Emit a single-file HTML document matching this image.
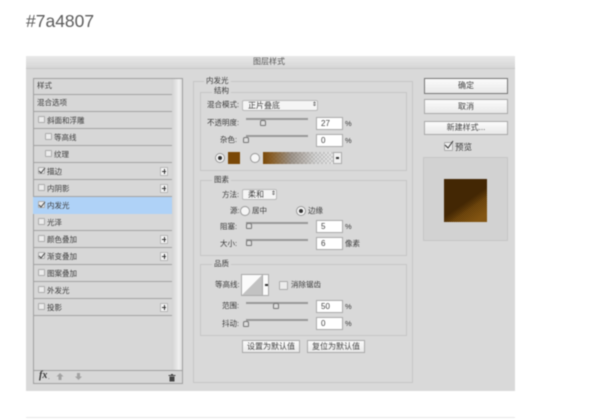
<!DOCTYPE html>
<html><head><meta charset="utf-8">
<style>
html,body{margin:0;padding:0;background:#fff}
body{width:600px;height:420px;position:relative;overflow:hidden;font-family:"Liberation Sans","Noto Sans CJK SC",sans-serif}
#d div,#d span{position:absolute;box-sizing:border-box}
#d{position:absolute;left:0;top:0;width:600px;height:420px;filter:blur(.45px)}
.t{font-size:7.5px;line-height:10px;color:#3c3c3c;white-space:nowrap}
.r{left:33px;width:139px;height:17px;border-bottom:1px solid #a4a4a4}
.cb{width:7px;height:7px;background:#ececec;border:1px solid #ababab;border-radius:1px}
.pl{width:8px;height:9px;left:160px;background:#f4f4f4;border:1px solid #b8b8b8;color:#333}
.pl:before{content:"";position:absolute;left:1px;top:3px;width:4px;height:1px;background:#333}
.pl:after{content:"";position:absolute;left:2.5px;top:1px;width:1px;height:5px;background:#333}
.gb{border:1px solid #c6c6c6}
.lb{background:#d9d9d9;padding:0 2px}
.sel{background:#f5f5f5;border:1px solid #b8b8b8;border-radius:2px;font-size:8px;line-height:9px;color:#444;padding-left:5px;white-space:nowrap}
.tr{height:2px;width:62px;left:246px;background:#999}
.th{width:6px;height:6px;background:#ddd;border:1px solid #777;border-radius:2px 2px 1px 1px}
.in{left:316px;width:27px;height:13px;background:#fff;border:1px solid #aaa;font-size:8px;line-height:11px;color:#444;padding-left:4px;font-family:"Liberation Sans",sans-serif}
.rd{width:10px;height:10px;border-radius:50%;background:#f6f6f6;border:1px solid #999}
.dot{left:2px;top:2px;width:4px;height:4px;border-radius:50%;background:#333}
.btn{background:linear-gradient(#fbfbfb,#e9e9e9);border:1px solid #aaa;font-size:8px;color:#444;text-align:center;white-space:nowrap}
</style></head><body><div id="d">
<div style="left:26px;top:10px;font-size:17.5px;line-height:22px;color:#5c5c5c;font-family:'Liberation Sans',sans-serif">#7a4807</div>

<div style="left:26px;top:56px;width:489px;height:335px;background:#d9d9d9"></div>
<div style="left:26px;top:56px;width:489px;height:13px;background:linear-gradient(#e8e8e8,#d6d6d6);border-bottom:1px solid #c6c6c6"></div>
<div class="t" style="left:253px;top:57px;color:#555;font-size:8px">图层样式</div>

<div style="left:33px;top:78px;width:150px;height:306px;background:#d7d7d7;border:1px solid #a0a0a0"></div>
<div style="left:172px;top:79px;width:10px;height:291px;background:linear-gradient(90deg,#d3d3d3,#f0f0f0 70%,#dcdcdc)"></div>
<div style="left:34px;top:370px;width:148px;height:1px;background:#a0a0a0"></div>

<div class="r" style="top:78px"></div><div class="t" style="left:37px;top:81px">样式</div>
<div class="r" style="top:95px"></div><div class="t" style="left:37px;top:98px">混合选项</div>
<div class="r" style="top:112px"></div><div class="cb" style="left:38px;top:116px"></div><div class="t" style="left:47px;top:116px">斜面和浮雕</div>
<div class="r" style="top:129px"></div><div class="cb" style="left:45px;top:133px"></div><div class="t" style="left:54px;top:133px">等高线</div>
<div class="r" style="top:146px"></div><div class="cb" style="left:45px;top:150px"></div><div class="t" style="left:54px;top:150px">纹理</div>
<div class="r" style="top:163px"></div><div class="cb" style="left:38px;top:167px"></div><div class="t" style="left:47px;top:167px">描边</div><div class="pl" style="top:167px"></div>
<div class="r" style="top:180px"></div><div class="cb" style="left:38px;top:184px"></div><div class="t" style="left:47px;top:184px">内阴影</div><div class="pl" style="top:184px"></div>
<div class="r" style="top:197px;background:#afd2f7;height:17px;border:0"></div><div class="cb" style="left:38px;top:201px"></div><div class="t" style="left:47px;top:201px">内发光</div>
<div class="r" style="top:214px"></div><div class="cb" style="left:38px;top:218px"></div><div class="t" style="left:47px;top:218px">光泽</div>
<div class="r" style="top:231px"></div><div class="cb" style="left:38px;top:235px"></div><div class="t" style="left:47px;top:235px">颜色叠加</div><div class="pl" style="top:235px"></div>
<div class="r" style="top:248px"></div><div class="cb" style="left:38px;top:252px"></div><div class="t" style="left:47px;top:252px">渐变叠加</div><div class="pl" style="top:252px"></div>
<div class="r" style="top:265px"></div><div class="cb" style="left:38px;top:269px"></div><div class="t" style="left:47px;top:269px">图案叠加</div>
<div class="r" style="top:282px"></div><div class="cb" style="left:38px;top:286px"></div><div class="t" style="left:47px;top:286px">外发光</div>
<div class="r" style="top:299px"></div><div class="cb" style="left:38px;top:303px"></div><div class="t" style="left:47px;top:303px">投影</div><div class="pl" style="top:303px"></div>

<svg style="position:absolute;left:0;top:0" width="600" height="420" fill="none" stroke="#444">
<path d="M39 171l2 2 4-5M39 205l2 2 4-5M39 256l2 2 4-5" stroke-width="1"/>
<path d="M60 373l-3.5 3.5h2v3.500h3v-3.500h2zM78.500 380l-3.500-3.500h2v-3.500h3v3.500h2z" fill="#a2a2a2" stroke="none"/>
<path d="M168.500 375.500h7M170 377h4v4h-4zM171 374.500h2" fill="#444" stroke="#444" stroke-width="1"/>
</svg>
<div style="left:39px;top:369px;font:italic bold 10px/14px 'Liberation Serif',serif;color:#333">fx</div>
<div style="left:48px;top:374px;font-size:6px;line-height:8px;color:#444">.</div>

<div class="gb" style="left:193px;top:81px;width:220px;height:302px"></div>
<div class="t lb" style="left:204px;top:76px">内发光</div>
<div class="gb" style="left:200px;top:92px;width:207px;height:79px"></div>
<div class="t lb" style="left:212px;top:86px">结构</div>
<div class="t" style="left:207px;top:100px">混合模式:</div>
<div class="sel" style="left:242px;top:100px;width:76px;height:11px">正片叠底</div>
<div class="t" style="left:312px;top:100px;font-size:6px">⇕</div>
<div class="t" style="left:207px;top:118px">不透明度:</div>
<div class="tr" style="top:118px"></div><div class="th" style="left:260px;top:120px"></div>
<div class="in" style="top:117px">27</div><div class="t" style="left:345px;top:119px">%</div>
<div class="t" style="left:220px;top:135px">杂色:</div>
<div class="tr" style="top:135px"></div><div class="th" style="left:243px;top:137px"></div>
<div class="in" style="top:134px">0</div><div class="t" style="left:345px;top:136px">%</div>
<div class="rd" style="left:215px;top:153px"><span class="dot"></span></div>
<div style="left:228px;top:152px;width:12px;height:12px;background:#7a4807"></div>
<div class="rd" style="left:250px;top:153px"></div>
<div style="left:263px;top:152px;width:70px;height:12px;background:repeating-conic-gradient(#e8e8e8 0 25%,#c8c8c8 0 50%) 0 0/4px 4px"></div>
<div style="left:263px;top:152px;width:70px;height:12px;background:linear-gradient(90deg,#7a4807 0,rgba(122,72,7,.85) 12%,rgba(90,70,50,.5) 40%,rgba(90,90,90,.12) 75%,rgba(90,90,90,0) 100%)"></div>
<div style="left:333px;top:152px;width:9px;height:12px;background:#f2f2f2;border:1px solid #aaa"></div>
<div style="left:336px;top:157px;width:3px;height:2px;background:#333"></div>

<div class="gb" style="left:200px;top:180px;width:207px;height:76px"></div>
<div class="t lb" style="left:212px;top:175px">图素</div>
<div class="t" style="left:222px;top:190px">方法:</div>
<div class="sel" style="left:242px;top:189px;width:35px;height:11px">柔和</div>
<div class="t" style="left:271px;top:189px;font-size:6px">⇕</div>
<div class="t" style="left:230px;top:206px">源:</div>
<div class="rd" style="left:240px;top:206px"></div><div class="t" style="left:252px;top:206px">居中</div>
<div class="rd" style="left:296px;top:206px"><span class="dot"></span></div><div class="t" style="left:308px;top:206px">边缘</div>
<div class="t" style="left:220px;top:222px">阻塞:</div>
<div class="tr" style="top:222px"></div><div class="th" style="left:246px;top:223px"></div>
<div class="in" style="top:220px">5</div><div class="t" style="left:345px;top:222px">%</div>
<div class="t" style="left:220px;top:239px">大小:</div>
<div class="tr" style="top:239px"></div><div class="th" style="left:246px;top:240px"></div>
<div class="in" style="top:237px">6</div><div class="t" style="left:345px;top:239px">像素</div>

<div class="gb" style="left:200px;top:264px;width:207px;height:72px"></div>
<div class="t lb" style="left:212px;top:259px">品质</div>
<div class="t" style="left:215px;top:280px">等高线:</div>
<div style="left:241px;top:274px;width:28px;height:22px;background:#fbfbfb;border:1px solid #aaa"></div>
<svg style="position:absolute;left:242px;top:275px" width="20" height="20"><path d="M0 20L20 0V20Z" fill="#c2c2c2"/></svg>
<div style="left:262px;top:275px;width:1px;height:20px;background:#aaa"></div>
<div style="left:265px;top:284px;width:3px;height:2px;background:#333"></div>
<div class="cb" style="left:279px;top:281px;width:9px;height:9px"></div>
<div class="t" style="left:291px;top:280px">消除锯齿</div>
<div class="t" style="left:222px;top:301px">范围:</div>
<div class="tr" style="top:302px"></div><div class="th" style="left:273px;top:303px"></div>
<div class="in" style="top:300px">50</div><div class="t" style="left:345px;top:302px">%</div>
<div class="t" style="left:222px;top:319px">抖动:</div>
<div class="tr" style="top:319px"></div><div class="th" style="left:243px;top:321px"></div>
<div class="in" style="top:317px">0</div><div class="t" style="left:345px;top:319px">%</div>
<div class="btn" style="left:242px;top:340px;width:58px;height:13px;line-height:11px">设置为默认值</div>
<div class="btn" style="left:307px;top:340px;width:58px;height:13px;line-height:11px">复位为默认值</div>

<div class="btn" style="left:424px;top:78px;width:84px;height:16px;line-height:14px;border:1px solid #777">确定</div>
<div class="btn" style="left:424px;top:99px;width:84px;height:15px;line-height:13px">取消</div>
<div class="btn" style="left:424px;top:121px;width:84px;height:14px;line-height:12px">新建样式...</div>
<div class="cb" style="left:444px;top:142px;width:9px;height:9px;background:#eee"></div>
<svg style="position:absolute;left:0;top:0" width="600" height="420" fill="none" stroke="#333"><path d="M445 145l3 3 5-7"/></svg>
<div class="t" style="left:455px;top:142px;font-size:8.500px">预览</div>
<div style="left:423px;top:157px;width:85px;height:84px;background:#d2d2d2;border:1px solid #c6c6c6"></div>
<div style="left:444px;top:179px;width:43px;height:43px;background:#432704"></div>
<div style="left:444px;top:179px;width:43px;height:43px;background:repeating-conic-gradient(#8a5a12 0 25%,transparent 0 50%) 0 0/2px 2px;-webkit-mask-image:linear-gradient(145deg,transparent 52%,#000 66%);mask-image:linear-gradient(145deg,transparent 52%,#000 66%)"></div>
<div style="left:444px;top:179px;width:43px;height:43px;background:linear-gradient(145deg,rgba(122,80,16,0) 62%,rgba(132,86,18,.95) 88%)"></div>

<div style="left:26px;top:417px;width:489px;height:1px;background:#e8e8e8"></div>
</div></body></html>
